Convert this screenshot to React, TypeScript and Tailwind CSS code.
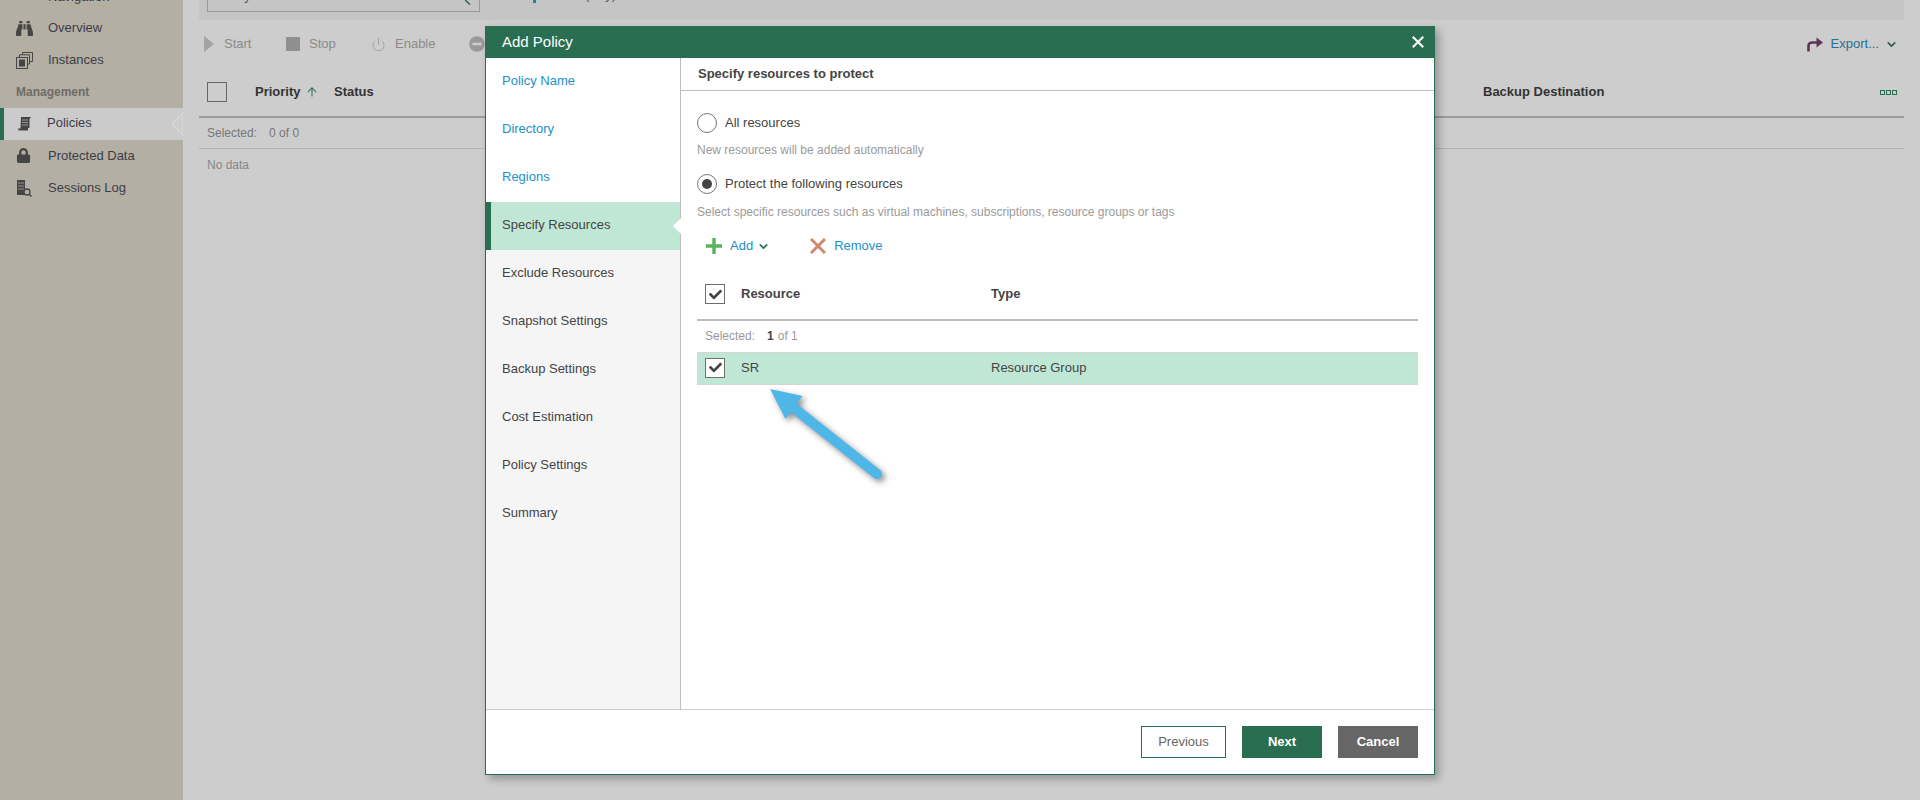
import React from "react";
import { ChevronDown, Power, ArrowUp } from "lucide-react";
import { FaBinoculars, FaLock, FaMinusCircle, FaCheck } from "react-icons/fa";

const font = { fontFamily: "'Liberation Sans', Arial, sans-serif" };

function InstancesIcon() {
  return (
    <svg width="17" height="17" viewBox="0 0 17 17" fill="none" stroke="#454545" strokeWidth="1">
      <rect x="0.5" y="5.5" width="11" height="11" />
      <rect x="3.5" y="8" width="5" height="6" fill="#454545" />
      <path d="M3.5 5V2.8H13.5V12H12" />
      <path d="M6.5 2.5V0.5H16.5V9.5H14" />
    </svg>
  );
}

function ScrollIcon() {
  return (
    <svg width="13" height="14" viewBox="0 0 13 14" fill="#454545">
      <path d="M3 0H13L11.5 2V11H10V13.5H1.5C0.5 13.5 0 12.8 0 11.5H2.5Z" />
      <path d="M4 3H10M4 5.5H10M4 8H10" stroke="#b5b5b5" strokeWidth="0.7" />
    </svg>
  );
}

function LogIcon() {
  return (
    <svg width="16" height="17" viewBox="0 0 16 17">
      <rect x="1" y="0" width="8" height="15" fill="#454545" />
      <path d="M2 3H8M2 6H8M2 9H8" stroke="#a8a49a" strokeWidth="0.8" />
      <circle cx="11" cy="12" r="3" fill="#b3afa3" stroke="#454545" strokeWidth="1.3" />
      <path d="M13 14L15.5 16.5" stroke="#454545" strokeWidth="1.5" />
    </svg>
  );
}

function ExportIcon() {
  return (
    <svg width="16" height="16" viewBox="0 0 16 16" fill="none">
      <path d="M1.5 15.5V10C1.5 7.5 3 6.5 5.5 6.5H10" stroke="#5c3558" strokeWidth="2.6" />
      <path d="M9.5 1.5L16 6.5L9.5 11.5Z" fill="#5c3558" />
    </svg>
  );
}

function PlusIcon() {
  return (
    <svg width="16" height="16" viewBox="0 0 16 16">
      <path d="M0 8H16M8 0V16" stroke="#57b45c" strokeWidth="3.4" />
    </svg>
  );
}

function CrossIcon({ size, color, w }: { size: number; color: string; w: number }) {
  return (
    <svg width={size} height={size} viewBox="0 0 16 16">
      <path d="M1 1L15 15M15 1L1 15" stroke={color} strokeWidth={w} />
    </svg>
  );
}

function Box({ checked, dim }: { checked?: boolean; dim?: boolean }) {
  return (
    <div className={`flex h-[20px] w-[20px] shrink-0 items-center justify-center border bg-transparent ${dim ? "border-[#666666]" : "border-[#6e6e6e]"} ${checked ? "bg-white" : ""}`}>
      {checked && <FaCheck size={13} color="#444444" />}
    </div>
  );
}

function Radio({ on }: { on?: boolean }) {
  return (
    <div className="flex h-[20px] w-[20px] shrink-0 items-center justify-center rounded-full border border-[#777777] bg-white">
      {on && <div className="h-[10px] w-[10px] rounded-full bg-[#444444]" />}
    </div>
  );
}

function SideItem({ icon, label, h = "h-[32px]" }: { icon: React.ReactNode; label: string; h?: string }) {
  return (
    <div className={`flex items-center text-[13px] text-[#3d3d49] ${h}`}>
      <div className="flex w-[48px] shrink-0 items-center pl-[16px]">{icon}</div>
      <span>{label}</span>
    </div>
  );
}

const steps: { label: string; state: "link" | "current" | "todo" }[] = [
  { label: "Policy Name", state: "link" },
  { label: "Directory", state: "link" },
  { label: "Regions", state: "link" },
  { label: "Specify Resources", state: "current" },
  { label: "Exclude Resources", state: "todo" },
  { label: "Snapshot Settings", state: "todo" },
  { label: "Backup Settings", state: "todo" },
  { label: "Cost Estimation", state: "todo" },
  { label: "Policy Settings", state: "todo" },
  { label: "Summary", state: "todo" },
];

export default function App() {
  return (
    <div className="relative flex h-[800px] w-[1920px] overflow-hidden bg-[#cdcdcd]" style={font}>
      <aside className="h-full w-[183px] shrink-0 overflow-hidden bg-[#b3afa3]">
        <div className="-mt-[17px] flex h-[28px] items-center pl-[48px] text-[13px] text-[#3d3d49]">Navigation</div>
        <SideItem icon={<FaBinoculars size={17} color="#454545" />} label="Overview" h="h-[32px] pt-[2px]" />
        <SideItem icon={<InstancesIcon />} label="Instances" h="h-[32px] pt-[2px]" />
        <div className="flex h-[33px] items-center pl-[16px] text-[12px] font-bold text-[#6f6c66]">Management</div>
        <div className="relative flex h-[32px] items-center bg-[#cbcbcb] text-[13px] text-[#3d3d49]">
          <div className="h-full w-[4px] bg-[#2a6e52]" />
          <div className="flex w-[43px] items-center pl-[14px]"><ScrollIcon /></div>
          <span className="mb-[2px]">Policies</span>
          <svg className="absolute right-0 top-[4px]" width="12" height="24" viewBox="0 0 12 24">
            <path d="M12 0.5L1 12L12 23.5Z" fill="#cdcdcd" stroke="#dedede" strokeWidth="1" />
          </svg>
        </div>
        <SideItem icon={<FaLock size={15} color="#454545" />} label="Protected Data" h="h-[31px]" />
        <SideItem icon={<LogIcon />} label="Sessions Log" h="h-[32px] pt-[2px]" />
      </aside>

      <main className="min-w-0 flex-1 px-[16px]">
        <div className="flex h-[20px] overflow-hidden bg-[#c5c5c5] text-[13px] text-[#555555]">
          <div className="relative ml-[8px] -mt-[19px] flex h-[31px] w-[273px] items-start border border-[#999999] pl-[8px] pt-[4px]">
            Policy
            <svg className="absolute right-[8px] top-[18px]" width="6" height="5" viewBox="0 0 6 5">
              <path d="M0 0L5 4.5" stroke="#2a6e52" strokeWidth="1.6" />
            </svg>
          </div>
          <div className="relative ml-[53px] w-[100px]">
            <div className="absolute -top-[1px] left-0 h-[4px] w-[3px] bg-[#1b7fb8]" />
            <span className="absolute -top-[15px] left-[52px]">(Any)</span>
          </div>
        </div>

        <div className="flex h-[46px] items-center pl-[5px] pt-[2px] text-[13px] text-[#8a8a8a]">
          <svg width="10" height="16" viewBox="0 0 10 16"><path d="M0 0L10 8L0 16Z" fill="#a3a3a3" /></svg>
          <span className="ml-[10px] w-[27px]">Start</span>
          <div className="ml-[35px] h-[14px] w-[14px] bg-[#8f8f8f]" />
          <span className="ml-[9px] w-[27px]">Stop</span>
          <div className="ml-[35px]"><Power size={15} strokeWidth={1.6} color="#a3a3a3" /></div>
          <span className="ml-[9px] w-[40px]">Enable</span>
          <div className="ml-[34px]"><FaMinusCircle size={16} color="#9a9a9a" /></div>
          <div className="ml-auto flex items-center pr-[6px] text-[#2a6f96]">
            <ExportIcon />
            <span className="ml-[8px]">Export...</span>
            <ChevronDown size={13} strokeWidth={3} color="#2f5a48" className="ml-[6px]" />
          </div>
        </div>

        <div className="mt-[2px] flex h-[50px] items-center border-b-2 border-[#9c9c9c] pl-[8px] text-[13px] font-bold text-[#333333]">
          <Box dim />
          <span className="ml-[28px] w-[47px]">Priority</span>
          <ArrowUp size={14} strokeWidth={1.8} color="#2a6e52" className="ml-[3px]" />
          <span className="ml-[15px]">Status</span>
          <div className="ml-auto flex w-[421px] items-center justify-between pr-[7px]">
            <span>Backup Destination</span>
            <div className="flex gap-[1px]">
              <div className="h-[5px] w-[5px] border border-[#2a6e52]" />
              <div className="h-[5px] w-[5px] border border-[#2a6e52]" />
              <div className="h-[5px] w-[5px] border border-[#2a6e52]" />
            </div>
          </div>
        </div>
        <div className="flex h-[31px] items-center border-b border-[#b3b3b3] pl-[8px] text-[12px] text-[#777777]">
          <span>Selected:</span>
          <span className="ml-[12px]">0 of 0</span>
        </div>
        <div className="flex h-[31px] items-center pl-[8px] text-[12px] text-[#888888]">No data</div>
      </main>

      {/* dialog */}
      <div className="absolute left-[485px] top-[26px] flex h-[749px] w-[950px] flex-col border border-t-0 border-[#2a6e52] bg-white shadow-[4px_4px_8px_rgba(0,0,0,0.28)]">
        <div className="-mx-px flex h-[32px] shrink-0 items-center justify-between bg-[#2a6e52] pl-[17px] pr-[11px] text-[15px] text-white">
          <span>Add Policy</span>
          <CrossIcon size={12} color="#ffffff" w={2.8} />
        </div>
        <div className="flex min-h-0 flex-1">
          <nav className="flex w-[195px] shrink-0 flex-col border-r border-[#bdbdbd] bg-[#f5f5f5] text-[13px]">
            {steps.map((s) => (
              <div
                key={s.label}
                className={
                  s.state === "link"
                    ? "relative flex h-[48px] shrink-0 items-center bg-white pb-[2px] pl-[16px] text-[#2390c9]"
                    : s.state === "current"
                    ? "relative flex h-[48px] shrink-0 items-center border-l-[5px] border-[#2a6e52] bg-[#c0e7d6] pb-[2px] pl-[11px] text-[#444444]"
                    : "relative flex h-[48px] shrink-0 items-center pb-[2px] pl-[16px] text-[#444444]"
                }
              >
                {s.label}
                {s.state === "current" && (
                  <svg className="absolute -right-px top-[16px]" width="8" height="16" viewBox="0 0 8 16">
                    <path d="M8 0L0 8L8 16Z" fill="#ffffff" />
                  </svg>
                )}
              </div>
            ))}
          </nav>
          <section className="relative min-w-0 flex-1">
            <div className="flex h-[33px] items-center border-b border-[#bdbdbd] pl-[17px] text-[13px] font-bold text-[#444444]">
              Specify resources to protect
            </div>
            <div className="px-[16px] text-[13px] text-[#444444]">
              <div className="mt-[22px] flex items-center gap-[8px]"><Radio /><span>All resources</span></div>
              <div className="mt-[9px] flex h-[16px] items-center text-[12px] text-[#9a9a9a]">New resources will be added automatically</div>
              <div className="mt-[16px] flex items-center gap-[8px]"><Radio on /><span>Protect the following resources</span></div>
              <div className="mt-[10px] flex h-[16px] items-center text-[12px] text-[#9a9a9a]">
                Select specific resources such as virtual machines, subscriptions, resource groups or tags
              </div>
              <div className="mt-[14px] flex h-[24px] items-center pl-[9px] text-[#2390c9]">
                <PlusIcon />
                <span className="ml-[8px]">Add</span>
                <ChevronDown size={13} strokeWidth={3} color="#2a6e52" className="ml-[4px]" />
                <div className="ml-[40px]"><CrossIcon size={16} color="#cf8a6e" w={3} /></div>
                <span className="ml-[8px]">Remove</span>
              </div>
              <div className="mt-[13px] flex h-[50px] items-center border-b-2 border-[#bdbdbd] pb-[2px] pl-[8px] font-bold">
                <Box checked />
                <span className="ml-[16px] w-[250px]">Resource</span>
                <span>Type</span>
              </div>
              <div className="flex h-[31px] items-center pb-[2px] pl-[8px] text-[12px] text-[#9a9a9a]">
                <span>Selected:</span>
                <b className="ml-[12px] font-bold text-[#444444]">1</b>
                <span className="ml-[4px]">of 1</span>
              </div>
              <div className="flex h-[33px] items-center border-y border-[#d5d5d5] bg-[#c0e7d6] pb-[2px] pl-[8px]">
                <Box checked />
                <span className="ml-[16px] w-[250px]">SR</span>
                <span>Resource Group</span>
              </div>
            </div>
            <svg
              className="absolute left-[85px] top-[325px] drop-shadow-[3px_3px_3px_rgba(0,0,0,0.45)]"
              width="120"
              height="100"
              viewBox="0 0 120 100"
              fill="none"
            >
              <path d="M4 6L36.5 13L19.5 36Z" fill="#4fb6e8" />
              <path d="M24 22L111 91" stroke="#4fb6e8" strokeWidth="10" strokeLinecap="round" />
            </svg>
          </section>
        </div>
        <div className="flex h-[65px] shrink-0 items-start justify-end gap-[16px] border-t border-[#cfcfcf] pr-[16px] pt-[16px] text-[13px]">
          <div className="flex h-[32px] w-[85px] items-center justify-center border border-[#2a6e52] text-[#666666]">Previous</div>
          <div className="flex h-[32px] w-[80px] items-center justify-center bg-[#2a6e52] font-bold text-white">Next</div>
          <div className="flex h-[32px] w-[80px] items-center justify-center bg-[#666666] font-bold text-white">Cancel</div>
        </div>
      </div>
    </div>
  );
}
